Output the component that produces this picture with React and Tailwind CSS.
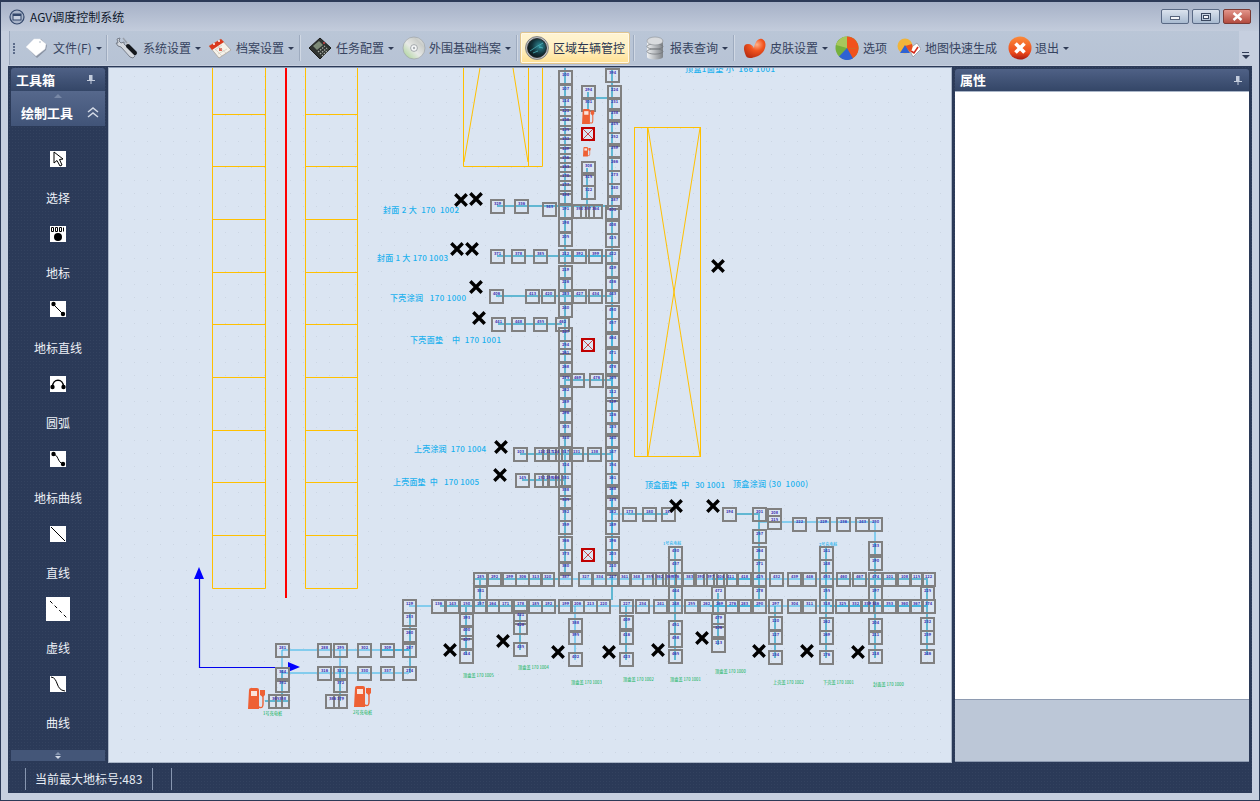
import React from "react";

const I = ({ children }) => (
  <svg width="24" height="24" viewBox="0 0 24 24" className="shrink-0">{children}</svg>
);
const TagIcon = () => (
  <I>
    <polygon points="2,12 10,4 16,3 22,9 21,14 12,22" fill="#8a93a3" />
    <polygon points="1,11 9,3 15,3 21,8 20,13 11,20" fill="#ffffff" stroke="#e6e9ee" strokeWidth="0.5" />
    <circle cx="15" cy="6" r="1" fill="#c9d0da" />
  </I>
);
const ToolIcon = () => (
  <I>
    <path d="M3 3 L6 2 L5 5 L7 7 L10 6 L10 8 L20 17 L21 20 L19 22 L16 21 L7 11 L4 10 L2 7 L4 7 Z" fill="#d4d8de" stroke="#6f7682" strokeWidth="0.9" />
    <path d="M12 9 L15 6" stroke="#c4c8ce" strokeWidth="2" />
    <path d="M14 10 L21 17" stroke="#15181d" strokeWidth="4" strokeLinecap="round" />
    <path d="M9 2 L13 7" stroke="#9aa0aa" strokeWidth="1.5" />
  </I>
);
const CalIcon = () => (
  <I>
    <polygon points="1,10 13,3 23,14 11,22" fill="#f6f2ea" stroke="#a59c90" strokeWidth="0.7" />
    <polygon points="1,10 13,3 16,6 4,14" fill="#d9391e" />
    <circle cx="6" cy="8" r="1" fill="#fff" />
    <circle cx="11" cy="5" r="1" fill="#fff" />
    <rect x="11" y="12" width="3" height="3" fill="#e06a5a" />
    <path d="M7 14 L14 9 M10 18 L19 13 M6 12 L14 20 M10 10 L18 17" stroke="#c8c2b6" strokeWidth="0.6" />
  </I>
);
const CalcIcon = () => (
  <I>
    <polygon points="1,12 12,2 23,12 12,23" fill="#2f3330" stroke="#1a1c1a" strokeWidth="1" />
    <polygon points="5,10 11,5 15,9 9,14" fill="#7d8b78" />
    <path d="M10 16 L17 10 M12 18 L19 12 M14 20 L20 14" stroke="#a6aca4" strokeWidth="1.4" strokeDasharray="1.5 1.2" />
    <circle cx="16" cy="7" r="1" fill="#c44" />
  </I>
);
const CdIcon = () => (
  <I>
    <defs>
      <linearGradient id="cd" x1="0" y1="1" x2="1" y2="0">
        <stop offset="0" stopColor="#9fd08a" />
        <stop offset="0.45" stopColor="#e7e9e6" />
        <stop offset="0.75" stopColor="#c9ccc9" />
        <stop offset="1" stopColor="#eef0ef" />
      </linearGradient>
    </defs>
    <circle cx="12" cy="12" r="11" fill="url(#cd)" stroke="#9ea4a8" strokeWidth="0.7" />
    <circle cx="12" cy="12" r="3.4" fill="#f5f7f8" stroke="#8f959a" strokeWidth="0.8" />
    <circle cx="12" cy="12" r="1.2" fill="#aab0b5" />
  </I>
);
const RadarIcon = () => (
  <I>
    <defs>
      <radialGradient id="rd" cx="0.65" cy="0.4" r="0.7">
        <stop offset="0" stopColor="#2f8f9c" />
        <stop offset="0.6" stopColor="#123038" />
        <stop offset="1" stopColor="#0b1518" />
      </radialGradient>
    </defs>
    <circle cx="12" cy="12" r="11.5" fill="#b9bdc2" stroke="#555" strokeWidth="0.6" />
    <circle cx="12" cy="12" r="9.5" fill="url(#rd)" stroke="#222" strokeWidth="0.8" />
    <path d="M5 15 L11 11 L18 7 M8 17 L13 15 M14 11 L18 12" stroke="#58c5cf" strokeWidth="0.7" />
  </I>
);
const DbIcon = () => (
  <I>
    <defs>
      <linearGradient id="db" x1="0" y1="0" x2="1" y2="0">
        <stop offset="0" stopColor="#eef0f2" />
        <stop offset="0.5" stopColor="#b9bcc0" />
        <stop offset="1" stopColor="#7f8388" />
      </linearGradient>
    </defs>
    <rect x="4" y="4" width="16" height="17" fill="url(#db)" />
    <ellipse cx="12" cy="21" rx="8" ry="2.5" fill="url(#db)" />
    <ellipse cx="12" cy="15.5" rx="8" ry="2.6" fill="none" stroke="#6f7377" strokeWidth="0.7" />
    <ellipse cx="12" cy="10.5" rx="8" ry="2.6" fill="none" stroke="#6f7377" strokeWidth="0.7" />
    <ellipse cx="12" cy="5" rx="8" ry="4" fill="#d9dbde" stroke="#8c9095" strokeWidth="0.6" />
  </I>
);
const HeartIcon = () => (
  <I>
    <defs>
      <radialGradient id="ht" cx="0.6" cy="0.3" r="0.8">
        <stop offset="0" stopColor="#ffb28a" />
        <stop offset="0.4" stopColor="#f2541f" />
        <stop offset="1" stopColor="#b42a10" />
      </radialGradient>
    </defs>
    <path d="M3 20 C0 13 0 8 5 8 C8 8 10 10 11 12 C12 6 15 2 19 3 C24 5 23 12 20 16 C17 20 12 21 9 22 C6 22 4 22 3 20 Z" fill="url(#ht)" />
  </I>
);
const PieIcon = () => (
  <I>
    <circle cx="12" cy="12" r="11.5" fill="#76b13c" />
    <path d="M12 12 L12 0.5 A11.5 11.5 0 0 1 23.5 13 Z" fill="#f1521c" />
    <path d="M12 12 L23.5 13 A11.5 11.5 0 0 1 17 22.5 Z" fill="#f1521c" />
    <path d="M12 12 L18 22.5 A11.5 11.5 0 0 1 4 20.5 Z" fill="#2f62d3" />
    <path d="M12 12 L12 0.5 A11.5 11.5 0 0 0 1 9 Z" fill="#a7c75c" />
  </I>
);
const MapIcon = () => (
  <I>
    <polygon points="12,13 20,7 24,13 16,21" fill="#fff" stroke="#8a8f96" strokeWidth="0.7" />
    <path d="M14 15 L17 17 L21 11" stroke="#d42a1c" strokeWidth="1.6" fill="none" />
    <circle cx="8" cy="10" r="7.5" fill="#f1b43a" />
    <path d="M8 10 L15 8 A7.5 7.5 0 0 1 13 16 Z" fill="#ea4f1f" />
    <polygon points="8,9 13,17 3,17" fill="#2f62d3" />
  </I>
);
const ExitIcon = () => (
  <I>
    <defs>
      <linearGradient id="ex" x1="0" y1="0" x2="0" y2="1">
        <stop offset="0" stopColor="#fb8a3a" />
        <stop offset="0.7" stopColor="#ec4a1c" />
        <stop offset="1" stopColor="#a81a10" />
      </linearGradient>
    </defs>
    <circle cx="12" cy="12" r="11.5" fill="url(#ex)" />
    <path d="M7.5 7.5 L16.5 16.5 M16.5 7.5 L7.5 16.5" stroke="#fff" strokeWidth="3.6" />
  </I>
);

const Caret = () => <span className="ml-[4px] mt-[1px] h-0 w-0 border-x-[3px] border-t-[3px] border-x-transparent border-t-[#2f3b55]" />;
const Sep = ({ className }) => <div className={"h-[26px] w-[2px] bg-[#9eabbf] border-r border-[#d0d8e4] " + className} />;
const Item = ({ w, icon, label, caret, t = "ml-[5px]" }) => (
  <div className={"flex items-center " + w}>
    {icon}
    <span className={"whitespace-nowrap text-[12px] text-[#36435f] " + t}>{label}</span>
    {caret && <Caret />}
  </div>
);

const Pin = () => (
  <svg width="8" height="9" viewBox="0 0 8 9">
    <path d="M2 0 H6 V5 H8 V6 H4.5 V9 H3.5 V6 H0 V5 H2 Z" fill="#c3ccdc" />
    <rect x="5" y="0" width="1" height="5" fill="#8493ad" />
  </svg>
);

const Tile = ({ children, big }) => (
  <svg width={big ? 24 : 16} height={big ? 24 : 16} viewBox={big ? "0 0 24 24" : "0 0 16 16"} className="bg-white">
    {children}
  </svg>
);

const tools = [
  ["选择", <Tile key="a"><path d="M4 1 V12 L7 9.5 L10 15 L12 14 L9.5 8.5 L13 8 Z" fill="#fff" stroke="#000" strokeWidth="1" /></Tile>],
  ["地标", <Tile key="b"><path d="M1.5 1.5 H3.5 V5.5 H1.5 Z M5.5 1.5 H7.5 V5.5 H5.5 Z M9.5 1.5 H11.5 V5.5 H9.5 Z M13.5 1.5 V5.5" stroke="#000" fill="none" /><circle cx="8" cy="11" r="4" fill="#000" /></Tile>],
  ["地标直线", <Tile key="c"><path d="M3 3 L13 13" stroke="#000" /><circle cx="3.5" cy="3" r="2.2" /><circle cx="13" cy="13" r="2.2" /></Tile>],
  ["圆弧", <Tile key="d"><path d="M2.5 11 C2.5 2 13.5 2 13.5 11" stroke="#000" strokeWidth="1.6" fill="none" /><circle cx="2.5" cy="11" r="2.2" /><circle cx="13.5" cy="11" r="2.2" /></Tile>],
  ["地标曲线", <Tile key="e"><path d="M3 3 C9 4 7 11 13 13" stroke="#000" fill="none" /><circle cx="3.5" cy="3" r="2.2" /><circle cx="13" cy="13" r="2.2" /></Tile>],
  ["直线", <Tile key="f"><path d="M1 1 L15 15" stroke="#000" /></Tile>],
  ["虚线", <Tile big key="g"><path d="M4 4 L21 21" stroke="#000" strokeDasharray="3.5 3" /></Tile>],
  ["曲线", <Tile key="h"><path d="M1 1 C9 2 5 14 15 15" stroke="#000" fill="none" /></Tile>],
];

/* ---- map data, in page coordinates ---- */
const colX = (x, ys) => ys.map((y) => [x, y]);
const rowY = (y, xs) => xs.map((x) => [x, y]);
const boxes = [
  ...colX(558, [70, 84, 96, 106, 115, 125, 134, 144, 153, 162, 171, 180, 190, 204, 218, 232, 249, 265, 277, 289, 303, 327, 340, 348, 362, 373, 385, 397, 408, 422, 433, 447, 460, 473, 485, 495, 507, 520, 536, 549, 561, 572]),
  ...colX(605, [68, 205, 220, 233, 249, 263, 277, 289, 305, 318, 333, 348, 362, 373, 387, 397, 410, 422, 433, 447, 460, 473, 484, 495, 507, 520, 536, 549, 561, 572]),
  ...colX(607, [85, 97, 108, 119, 132, 143, 157, 170, 183, 195]),
  ...colX(581, [85, 97, 161, 172, 185]),
  [490, 199], [514, 199], [542, 202], [572, 204], [580, 204], [588, 204],
  ...rowY(249, [490, 511, 533, 572, 588]),
  ...rowY(289, [489, 525, 541, 572, 588]),
  ...rowY(317, [491, 511, 533, 555]),
  ...rowY(373, [570, 589]),
  ...rowY(447, [513, 534, 542, 548, 569, 587]),
  ...rowY(473, [515, 534, 542, 548]),
  ...rowY(507, [622, 642, 661, 722, 752]),
  [767, 508], [767, 515],
  ...rowY(517, [792, 816, 836, 855, 868]),
  ...colX(752, [529, 546, 559, 586]),
  ...rowY(572, [473, 487, 502, 515, 528, 540, 578, 592, 617, 629, 642, 652, 662, 668, 682, 693, 703, 713, 723, 737, 752, 769, 787, 802, 819, 836, 852, 868, 882, 897, 909, 921]),
  ...rowY(599, [402, 431, 445, 459, 473, 485, 498, 513, 528, 541, 558, 570, 583, 596, 619, 635, 653, 668, 684, 699, 712, 725, 737, 752, 768, 787, 802, 819, 835, 848, 860, 868, 882, 897, 909, 921]),
  [473, 586],
  ...colX(568, [618, 630, 652]),
  ...colX(619, [615, 630, 652]),
  ...colX(668, [546, 559, 586, 620, 633, 649]),
  ...colX(711, [586, 613, 623, 638]),
  ...colX(768, [616, 630, 650]),
  ...colX(819, [546, 559, 586, 617, 630, 650]),
  ...colX(868, [541, 556, 586, 618, 630, 649]),
  ...colX(920, [586, 617, 630, 649]),
  ...colX(402, [612, 628, 643, 666]),
  ...rowY(643, [275, 317, 333, 357, 380]),
  ...rowY(666, [317, 333, 357, 380]),
  ...colX(275, [667, 678, 694]), [268, 694],
  ...colX(333, [678, 694]), [325, 694],
  ...colX(459, [613, 625, 635, 649]),
  ...colX(513, [610, 620, 642]),
];
const thick = [
  [565, 68, 565, 572], [612, 68, 612, 600], [588, 92, 588, 115], [588, 98, 612, 98], [587, 168, 587, 205],
  [497, 206, 612, 206], [497, 256, 612, 256], [496, 296, 612, 296], [498, 324, 562, 324], [565, 380, 612, 380],
  [520, 454, 612, 454], [522, 480, 565, 480], [628, 514, 668, 514], [735, 514, 760, 514], [759, 514, 759, 600],
  [675, 546, 675, 660], [718, 593, 718, 645], [466, 606, 466, 655], [520, 610, 520, 650], [626, 606, 626, 660],
  [775, 606, 775, 658], [826, 546, 826, 658], [875, 541, 875, 658], [927, 579, 927, 655], [282, 670, 282, 701],
  [340, 670, 340, 701], [265, 701, 290, 701], [380, 650, 409, 650], [410, 612, 410, 673], [480, 579, 480, 606],
  [473, 579, 560, 579], [440, 606, 560, 606], [712, 579, 760, 579], [830, 579, 928, 579], [710, 606, 760, 606], [830, 606, 928, 606],
];
const thin = [
  [282, 650, 409, 650], [282, 673, 409, 673], [282, 650, 282, 667], [340, 650, 340, 673], [409, 606, 431, 606],
  [560, 606, 928, 606], [560, 579, 830, 579], [760, 522, 875, 522], [875, 522, 875, 545], [612, 514, 628, 514], [575, 606, 575, 660],
  [565, 256, 605, 256], [612, 300, 612, 560],
];
const crosses = [[461, 200], [476, 199], [457, 249], [472, 249], [476, 287], [479, 318], [718, 266], [501, 447], [500, 475], [676, 506], [713, 506], [450, 650], [503, 641], [558, 652], [609, 652], [658, 650], [702, 638], [759, 651], [807, 651], [858, 652]];
const labels = [
  [685, 72, "顶盒1面垫 小  166 1001", 90], [383, 213, "封面 2 大  170  1002", 76], [377, 261, "封面 1 大 170 1003", 71], [390, 301, "下壳涂润   170 1000", 76],
  [410, 343, "下壳面垫    中  170 1001", 91], [414, 452, "上壳涂润  170 1004", 72], [393, 485, "上壳面垫  中   170 1005", 86],
  [645, 488, "顶盒面垫  中   30 1001", 80], [733, 487, "顶盒涂润 (30  1000)", 75],
];
const green = [[463, 677, "顶盒盖 170 1005"], [518, 669, "顶盒盖 170 1004"], [571, 684, "顶盒盖 170 1003"], [623, 681, "顶盒盖 170 1002"], [670, 681, "顶盒盖 170 1001"], [715, 673, "顶盒盖 170 1000"], [773, 684, "上壳盖 170 1002"], [823, 684, "下壳盖 170 1001"], [873, 686, "封面盖 170 1000"], [263, 715, "1号充电桩"], [353, 714, "2号充电桩"]];
const rackY = [114, 166, 219, 272, 324, 377, 430, 482, 535];

const Fuel = ({ x, y, s = 1 }) => (
  <g transform={`translate(${x} ${y}) scale(${s})`}>
    <path d="M0 21 L1 2 Q1 0 3 0 H9 Q11 0 11 2 V21 Z" fill="#ee6034" />
    <rect x="3" y="3" width="6" height="5" fill="#fbe3da" />
    <path d="M11 19 Q15 21 15 16 V9 L14 7" stroke="#ee6034" strokeWidth="1.4" fill="none" />
    <path d="M12 2 H17 V7 L15 9 L12 7 Z" fill="#ee6034" />
  </g>
);

const MapCanvas = () => (
  <svg width="842" height="694" viewBox="109 68 842 694" className="block">
    <defs>
      <pattern id="dots" patternUnits="userSpaceOnUse" x="225" y="232" width="13" height="13">
        <rect width="1" height="1" fill="#ccd6e3" />
      </pattern>
    </defs>
    <rect x="109" y="68" width="842" height="694" fill="#dbe5f2" />
    <rect x="109" y="68" width="842" height="694" fill="url(#dots)" />

    <g fill="none" stroke="#ffc000" strokeWidth="1">
      <path d="M212.5 68 V588.5 H265.5 V68 M305.5 68 V588.5 H357.5 V68" />
      {rackY.map((y) => (
        <path key={y} d={`M212 ${y + 0.5} H266 M305 ${y + 0.5} H358`} />
      ))}
      <path d="M463.5 68 V166.5 H542.5 V68 M528.5 68 V166.5 M464 162 L480 68 M513 68 L528 162" />
      <rect x="634.5" y="127.5" width="66" height="329" />
      <path d="M647.5 127 V456 M648 128 L700 456 M700 128 L648 456" />
    </g>
    <rect x="285" y="68" width="2" height="530" fill="#ff0000" />

    <g stroke="#0000ee" strokeWidth="1.2" fill="none">
      <path d="M199.5 577 V667.5 H290" />
    </g>
    <polygon points="194,579 204,579 199,567" fill="#0000ff" />
    <polygon points="288,662 300,667 288,672" fill="#0000ff" />

    <g fill="none" stroke="#61b7d2" strokeWidth="2">
      {thick.map(([a, b, c, d], i) => (
        <line key={i} x1={a} y1={b} x2={c} y2={d} />
      ))}
    </g>
    <g fill="none" stroke="#2cb3e8" strokeWidth="1">
      {thin.map(([a, b, c, d], i) => (
        <line key={i} x1={a} y1={b} x2={c} y2={d} />
      ))}
    </g>

    <g fill="none" stroke="#808080" strokeWidth="2">
      {boxes.map(([x, y], i) => (
        <rect key={i} x={x + 1} y={y + 1} width="13" height="13" />
      ))}
    </g>
    <g fill="#3b30b0" fontSize="4" fontWeight="700" textAnchor="middle">
      {boxes.map(([x, y], i) => (
        <text key={i} x={x + 7.5} y={y + 5.5}>{100 + ((i * 7) % 380)}</text>
      ))}
    </g>

    <g fill="#dbe5f2" stroke="#c00000" strokeWidth="2">
      {[127, 338, 548].map((y) => (
        <g key={y}>
          <rect x="582" y={y + 1} width="12" height="12" />
          <path d={`M582 ${y + 1} L594 ${y + 13} M594 ${y + 1} L582 ${y + 13}`} strokeWidth="0.7" />
        </g>
      ))}
    </g>

    <Fuel x="582" y="109" s="0.72" />
    <Fuel x="583" y="147" s="0.45" />
    <Fuel x="248" y="688" />
    <Fuel x="354" y="686" />

    <g stroke="#000" strokeWidth="3.4" strokeLinecap="square">
      {crosses.map(([x, y], i) => (
        <path key={i} d={`M${x - 4.5} ${y - 4.5} L${x + 4.5} ${y + 4.5} M${x + 4.5} ${y - 4.5} L${x - 4.5} ${y + 4.5}`} />
      ))}
    </g>

    <g fill="#1bb1ee" fontSize="8" fontWeight="500">
      {labels.map(([x, y, t, w]) => (
        <text key={t} x={x} y={y} textLength={w} xmlSpace="preserve">{t}</text>
      ))}
      <text x="663" y="545" fontSize="4">1号充电桩</text>
      <text x="819" y="546" fontSize="4">2号充电桩</text>
    </g>
    <g fill="#00b050" fontSize="4.2">
      {green.map(([x, y, t]) => (
        <text key={t} x={x} y={y}>{t}</text>
      ))}
    </g>
  </svg>
);

export default function App() {
  return (
    <div className="flex h-[801px] w-[1260px] flex-col overflow-hidden border-x border-b border-t-2 border-[#2c3a57] bg-[#c6cfdf] font-['Noto_Sans_CJK_SC',sans-serif]">
      {/* title bar */}
      <div className="flex h-[29px] shrink-0 items-center bg-gradient-to-b from-[#a6b1c7] to-[#c3ccdc] pl-[8px] pr-[8px]">
        <svg width="16" height="16" viewBox="0 0 16 16">
          <circle cx="8" cy="8" r="7" fill="#a9b5ca" stroke="#33476b" strokeWidth="1.2" />
          <rect x="4" y="5" width="8" height="6" fill="#c6cfdf" stroke="#33476b" />
          <rect x="4" y="5" width="8" height="2" fill="#33476b" />
        </svg>
        <span className="ml-[5px] text-[12px] text-[#10192c]">AGV调度控制系统</span>
        <div className="ml-auto flex gap-[3px]">
          <div className="flex h-[15px] w-[28px] items-center justify-center rounded-[2px] border border-[#5a6a85] bg-gradient-to-b from-[#dbe3ee] to-[#a8bad0]">
            <span className="mt-[2px] h-[4px] w-[10px] border border-[#55627a] bg-[#f2f4f8]" />
          </div>
          <div className="flex h-[15px] w-[28px] items-center justify-center rounded-[2px] border border-[#5a6a85] bg-gradient-to-b from-[#dbe3ee] to-[#a8bad0]">
            <span className="flex h-[8px] w-[10px] items-center justify-center border border-[#3a4860]">
              <span className="h-[2px] w-[4px] bg-[#f2f4f8] outline outline-1 outline-[#3a4860]" />
            </span>
          </div>
          <div className="flex h-[15px] w-[28px] items-center justify-center rounded-[2px] border border-[#7a3a34] bg-gradient-to-b from-[#e3958b] to-[#b24a3e]">
            <svg width="11" height="9" viewBox="0 0 11 9">
              <path d="M1.5 1 L9.5 8 M9.5 1 L1.5 8" stroke="#fff" strokeWidth="2.4" />
            </svg>
          </div>
        </div>
      </div>

      {/* toolbar */}
      <div className="flex h-[35px] shrink-0">
        <div className="ml-[8px] flex h-[34px] w-[1230px] items-center border-l border-[#9aa7bc] bg-gradient-to-b from-[#bac6d7] to-[#b7c3d5] pl-[3px]">
          <div className="mr-[10px] flex flex-col gap-[1px]">
            {[0, 1, 2, 3].map((k) => (
              <span key={k} className="h-[2px] w-[2px] bg-[#5c6c8a]" />
            ))}
          </div>
          <Item w="w-[81px]" icon={<TagIcon />} label="文件(F)" caret t="ml-[4px]" />
          <Sep className="mr-[6px]" />
          <Item w="w-[94px]" icon={<ToolIcon />} label="系统设置" caret />
          <Item w="w-[91px]" icon={<CalIcon />} label="档案设置" caret t="ml-[4px]" />
          <Sep className="mr-[7px]" />
          <Item w="w-[94px]" icon={<CalcIcon />} label="任务配置" caret t="ml-[4px]" />
          <Item w="w-[114px]" icon={<CdIcon />} label="外围基础档案" caret t="ml-[3px]" />
          <Sep className="mr-[2px]" />
          <div className="flex h-[32px] w-[110px] items-center rounded-[2px] border border-[#e0c58f] bg-gradient-to-b from-[#fff4d2] via-[#fff0c4] to-[#ffe091] pl-[4px] shadow-[inset_0_0_0_1px_#fff8e6]">
            <RadarIcon />
            <span className="ml-[4px] whitespace-nowrap text-[12px] text-[#2a3650]">区域车辆管控</span>
          </div>
          <Sep className="ml-[3px] mr-[8px]" />
          <Item w="w-[90px]" icon={<DbIcon />} label="报表查询" caret t="ml-[3px]" />
          <Sep className="mr-[8px]" />
          <Item w="w-[92px]" icon={<HeartIcon />} label="皮肤设置" caret t="ml-[3px]" />
          <Item w="w-[62px]" icon={<PieIcon />} label="选项" t="ml-[4px]" />
          <Item w="w-[111px]" icon={<MapIcon />} label="地图快速生成" t="ml-[4px]" />
          <Item w="w-[80px]" icon={<ExitIcon />} label="退出" caret t="ml-[3px]" />
        </div>
        <div className="flex w-[13px] flex-col items-center pt-[21px]">
          <span className="h-[1px] w-[7px] bg-[#2f3b55]" />
          <span className="mt-[2px] h-0 w-0 border-x-[4px] border-t-[4px] border-x-transparent border-t-[#2f3b55]" />
        </div>
      </div>

      {/* main */}
      <div className="mx-[7px] flex min-h-0 w-[1244px] flex-1 flex-col bg-[#2b3a58] bg-[radial-gradient(#33425f_1px,transparent_1px)] bg-[length:3px_3px]">
        <div className="flex h-[698px] shrink-0">
          {/* toolbox */}
          <div className="flex w-[100px] shrink-0 flex-col px-[3px] pt-[2px]">
            <div className="flex h-[23px] shrink-0 items-center justify-between rounded-t-[3px] bg-gradient-to-b from-[#4f6186] to-[#344667] pl-[5px] pr-[10px]">
              <span className="text-[13px] font-bold text-white">工具箱</span>
              <Pin />
            </div>
            <div className="flex h-[35px] shrink-0 flex-col bg-gradient-to-b from-[#56688c] to-[#415478]">
              <span className="mx-auto mt-[3px] h-0 w-0 border-x-[4px] border-b-[4px] border-x-transparent border-b-[#7888a6]" />
              <div className="mt-[5px] flex items-center justify-between pl-[10px] pr-[6px]">
                <span className="text-[13px] font-bold text-white">绘制工具</span>
                <svg width="12" height="11" viewBox="0 0 12 11">
                  <path d="M1 5 L6 1 L11 5 M1 10 L6 6 L11 10" stroke="#d3dae6" strokeWidth="1.5" fill="none" />
                </svg>
              </div>
            </div>
            <div className="flex h-[624px] shrink-0 flex-col gap-[15px] overflow-hidden pt-[21px]">
              {tools.map(([t, ic]) => (
                <div key={t} className="flex h-[60px] shrink-0 flex-col items-center">
                  <div className="flex h-[24px] items-center">{ic}</div>
                  <span className="mt-[18px] h-[18px] text-[12px] leading-[18px] text-[#eef1f7]">{t}</span>
                </div>
              ))}
            </div>
            <div className="flex h-[11px] shrink-0 flex-col items-center justify-center bg-[#445678]">
              <span className="h-0 w-0 border-x-[3px] border-b-[3px] border-x-transparent border-b-[#8595b0]" />
              <span className="mt-[1px] h-0 w-0 border-x-[3px] border-t-[3px] border-x-transparent border-t-[#d3dae6]" />
            </div>
          </div>

          {/* canvas */}
          <div className="mt-[1px] h-[696px] w-[844px] shrink-0 border border-[#aab6c8] border-t-[#8f9db3]">
            <MapCanvas />
          </div>

          {/* properties */}
          <div className="ml-[3px] mt-[3px] flex h-[693px] w-[294px] shrink-0 flex-col">
            <div className="flex h-[22px] shrink-0 items-center justify-between rounded-t-[3px] bg-gradient-to-b from-[#4f6186] to-[#344667] pl-[5px] pr-[7px]">
              <span className="text-[13px] font-bold text-white">属性</span>
              <Pin />
            </div>
            <div className="h-[608px] shrink-0 border-t border-[#aab6c8] bg-white" />
            <div className="flex-1 border-y border-[#8e9bb1] bg-[#bcc7d7]" />
          </div>
        </div>

        {/* status */}
        <div className="flex h-[29px] items-center pl-[17px] text-[12px] text-[#e8edf5]">
          <span className="h-[22px] w-[1px] bg-[#8796b0]" />
          <span className="ml-[9px] w-[117px] whitespace-nowrap">当前最大地标号:483</span>
          <span className="h-[22px] w-[1px] bg-[#8796b0]" />
          <span className="ml-[18px] h-[22px] w-[1px] bg-[#8796b0]" />
        </div>
      </div>
      <div className="h-[7px] shrink-0" />
    </div>
  );
}
